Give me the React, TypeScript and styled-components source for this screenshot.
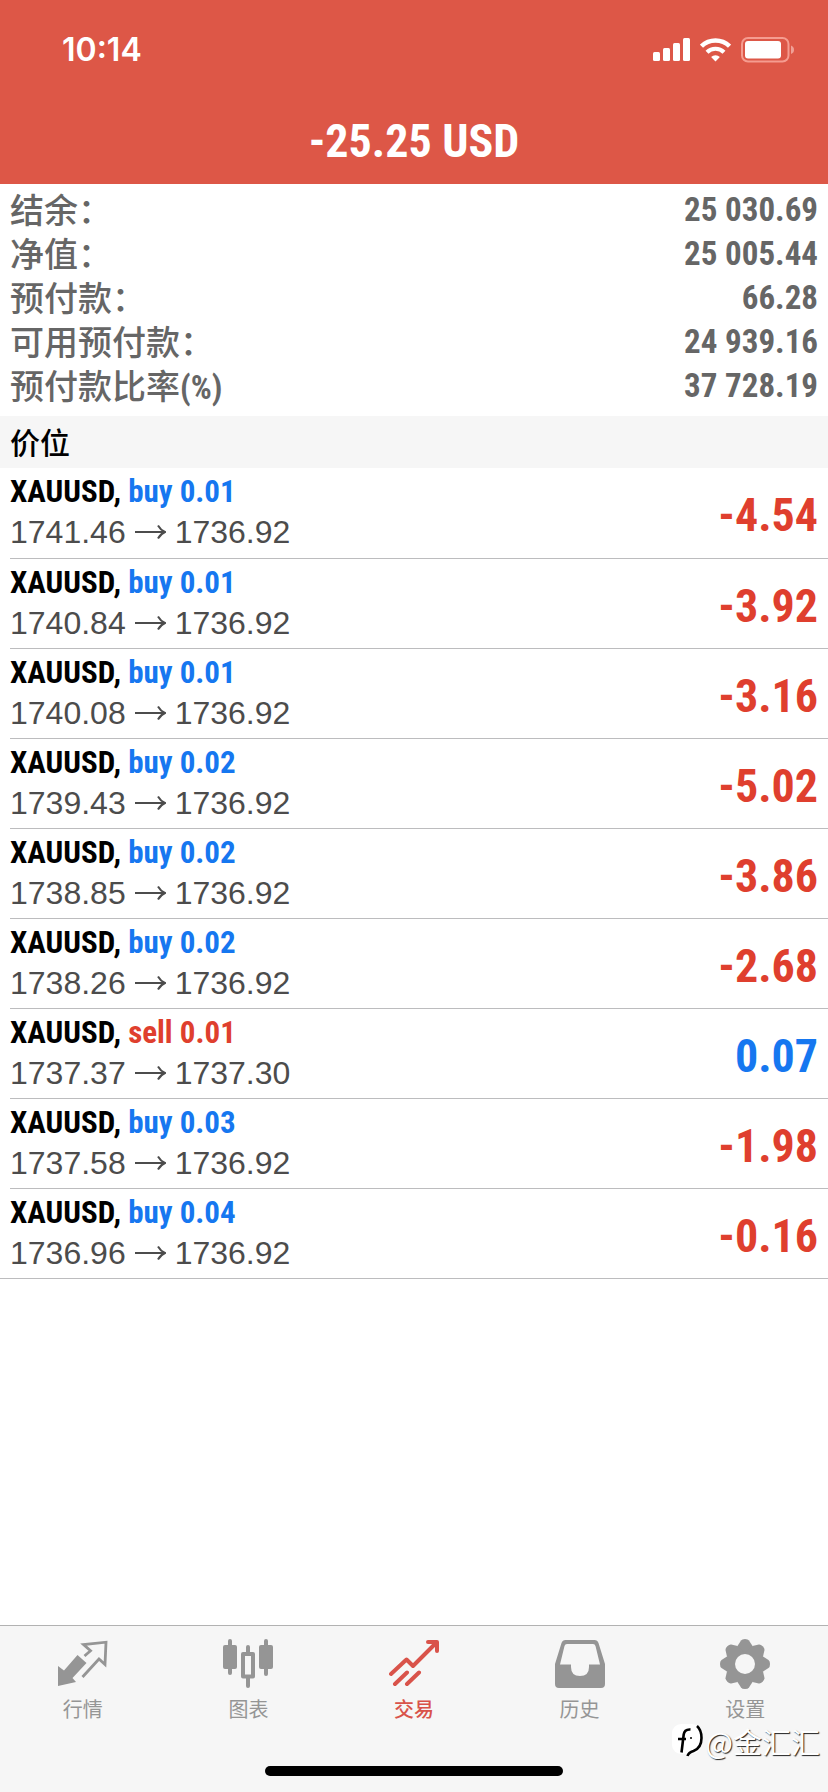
import React from "react";
import styled, { createGlobalStyle } from "styled-components";

const bold = `"Roboto Condensed", "Liberation Sans", Arial, "Noto Sans CJK SC", sans-serif`;
const regular = `"Liberation Sans", Arial, "Noto Sans CJK SC", sans-serif`;

const color = {
  header: "#dd5747",
  loss: "#df3f2e",
  profit: "#1677f0",
  muted: "#666666",
  price: "#4c4c4c",
  line: "#bcbcbe",
  bar: "#f6f6f6",
  tab: "#959595",
};

const GlobalStyle = createGlobalStyle`
  * { box-sizing: border-box; }
  body { margin: 0; background: #fff; font-family: ${regular}; }
`;

const Screen = styled.div`
  display: flex;
  flex-direction: column;
  min-height: 100vh;
`;

const Header = styled.header`
  background: ${color.header};
  color: #fff;
`;

const StatusBar = styled.div`
  display: flex;
  align-items: center;
  justify-content: space-between;
  height: 98px;
  padding: 2px 34px 0 62px;
`;

const Clock = styled.time`
  font: 600 32px/40px Inter, sans-serif;
`;

const StatusIcons = styled.div`
  display: flex;
  align-items: center;
  gap: 10px;
`;

const Total = styled.h1`
  margin: 0;
  text-align: center;
  font: 700 46px/86px ${bold};
`;

const Account = styled.dl`
  margin: 0;
  padding: 4px 10px 8px;
`;

const AccountRow = styled.div`
  display: flex;
  justify-content: space-between;
  color: ${color.muted};
`;

const Term = styled.dt`
  font: 500 34px/42px "Noto Sans CJK SC", sans-serif;
`;

const Suffix = styled.span`
  font: 700 33px/33px ${bold};
`;

const Amount = styled.dd`
  margin: 0;
  font: 700 33px/44px ${bold};
`;

const SectionTitle = styled.h2`
  margin: 0;
  padding: 0 10px 2px;
  background: ${color.bar};
  color: #000;
  font: 500 30px/50px "Noto Sans CJK SC", sans-serif;
`;

const Positions = styled.ul`
  margin: 0;
  padding: 0;
  list-style: none;
  border-bottom: 1px solid ${color.line};
`;

const Position = styled.li`
  display: flex;
  align-items: center;
  justify-content: space-between;
  height: 90px;
  margin-left: 10px;
  padding-right: 10px;

  & + & {
    border-top: 1px solid ${color.line};
  }
`;

const Order = styled.div`
  padding-bottom: 2px;
`;

const Deal = styled.div`
  font: 700 31px/40px ${bold};
  color: #000;
`;

const Side = styled.span<{ $sell: boolean }>`
  color: ${(p) => (p.$sell ? color.loss : color.profit)};
`;

const Prices = styled.div`
  display: flex;
  align-items: center;
  gap: 9px;
  font: 400 32px/40px ${regular};
  color: ${color.price};
`;

const Result = styled.div<{ $gain: boolean }>`
  padding-top: 4px;
  font: 700 46px/60px ${bold};
  color: ${(p) => (p.$gain ? color.profit : color.loss)};
`;

const Footer = styled.footer`
  position: sticky;
  bottom: 0;
  margin-top: auto;
  display: flex;
  flex-direction: column;
  align-items: center;
  justify-content: space-between;
  height: 167px;
  padding-bottom: 16px;
  border-top: 1px solid #b2b2b2;
  background: ${color.bar};
`;

const Tabs = styled.nav`
  display: flex;
  width: 100%;
`;

const Tab = styled.button<{ $active: boolean }>`
  flex: 1;
  display: flex;
  flex-direction: column;
  align-items: center;
  gap: 9px;
  padding: 13px 0 0;
  border: 0;
  background: none;
  color: ${(p) => (p.$active ? "#d9534a" : color.tab)};
  font: ${(p) => (p.$active ? 500 : 400)} 20px/24px ${regular};
`;

const HomeIndicator = styled.div`
  width: 36%;
  height: 10px;
  border-radius: 5px;
  background: #000;
`;

const Watermark = styled.div`
  position: absolute;
  right: 8px;
  bottom: 31px;
  display: flex;
  align-items: center;
  gap: 3px;
  color: #fff;
  font: 400 29px/40px "Noto Sans CJK SC", sans-serif;
  text-shadow: 1px 1px 1px #222;
`;

const SignalIcon = () => (
  <svg width="37" height="24" viewBox="0 0 37 24" fill="#fff" aria-hidden="true">
    <rect x="0" y="14" width="7" height="9" rx="1.5" />
    <rect x="10" y="10" width="7" height="13" rx="1.5" />
    <rect x="20" y="5" width="7" height="18" rx="1.5" />
    <rect x="30" y="0" width="7" height="23" rx="1.5" />
  </svg>
);

const WifiIcon = () => (
  <svg width="31" height="24" viewBox="0 0 31 24" fill="none" stroke="#fff" aria-hidden="true">
    <path d="M1.5 8.2a20 20 0 0 1 28 0" strokeWidth="4.4" />
    <path d="M7 14.2a12.2 12.2 0 0 1 17 0" strokeWidth="4.2" />
    <path d="M15.5 23.4l-4.4-4.5a6.4 6.4 0 0 1 8.8 0z" fill="#fff" stroke="none" />
  </svg>
);

const BatteryIcon = () => (
  <svg width="53" height="26" viewBox="0 0 53 26" aria-hidden="true">
    <rect x="1" y="1" width="46.5" height="23.5" rx="6" fill="none" stroke="#f59c90" strokeWidth="2" />
    <rect x="4" y="4" width="36" height="17.5" rx="3" fill="#fff" />
    <path d="M50 8.5q3 1.2 3 4.3t-3 4.3z" fill="#f0a096" />
  </svg>
);

const ArrowIcon = () => (
  <svg width="31" height="18" viewBox="0 0 31 18" fill="none" stroke="currentColor" strokeWidth="2" role="img" aria-label="to">
    <path d="M0 9h30M23 2.500q2.500 4.500 7 6.500q-4.500 2-7 6.500" />
  </svg>
);

const QuotesIcon = () => (
  <svg width="50" height="50" viewBox="0 0 50 50" aria-hidden="true">
    <path d="M19.5 16l9 8L14.500 39l3.500 4L0 47V27l6 4.500z" fill="currentColor" />
    <path d="M26.500 17l6-5.200-7-6.300 22.500-2.300-1 22.300-6-5.500L24.500 38" fill="none" stroke="currentColor" strokeWidth="2.800" />
  </svg>
);

const ChartIcon = () => (
  <svg width="50" height="50" viewBox="0 0 50 50" aria-hidden="true">
    <g fill="currentColor">
      <rect x="0" y="6" width="14" height="24" rx="2" />
      <rect x="5" y="0" width="4" height="36" rx="2" />
      <rect x="36" y="6" width="14" height="24" rx="2" />
      <rect x="41" y="0" width="4" height="37" rx="2" />
      <rect x="23" y="6" width="4" height="9" rx="2" />
      <rect x="23" y="37" width="4" height="12" rx="2" />
    </g>
    <rect x="20" y="15" width="10" height="22.500" fill="none" stroke="currentColor" strokeWidth="4" strokeLinejoin="round" />
  </svg>
);

const TradeIcon = () => (
  <svg width="50" height="50" viewBox="0 0 50 50" fill="none" stroke="currentColor" strokeWidth="4" strokeLinecap="round" strokeLinejoin="round" aria-hidden="true">
    <path d="M2 35l15.500-14.500L24 27 47 4M39 3h9v9M6 45l12-11.500M18 45l12-11.500" />
  </svg>
);

const HistoryIcon = () => (
  <svg width="50" height="50" viewBox="0 0 50 50" aria-hidden="true">
    <path
      fillRule="evenodd"
      fill="currentColor"
      d="M10.500 1h29q3 0 4 3L50 25v20q0 4-4 4H4q-4 0-4-4V25L6.500 4q1-3 4-3zM12 5q-2 0-2.500 2L5 25.500h11V28q0 9 9 9t9-9v-2.500h11L40.500 7Q40 5 38 5z"
    />
  </svg>
);

const SettingsIcon = () => (
  <svg width="50" height="50" viewBox="0 0 50 50" aria-hidden="true">
    <g fill="currentColor">
      {[0, 45, 90, 135].map((angle) => (
        <path key={angle} transform={`rotate(${angle} 25 25)`} d="M17.500 7L21 1.500Q22 0 25 0t4 1.500L32.500 7v36L29 48.500Q28 50 25 50t-4-1.500L17.500 43z" />
      ))}
    </g>
    <circle cx="25" cy="25" r="10" fill="#f6f6f6" />
  </svg>
);

const WatermarkLogo = () => (
  <svg width="31" height="34" viewBox="0 0 31 34" fill="none" aria-hidden="true">
    <rect x="0" y="0" width="29" height="30" rx="9" fill="#fff" />
    <path d="M18.500 5.500q-6-.5-6.800 5L9.500 28.500M6 15h8" stroke="#000" strokeWidth="2.600" />
    <path d="M25 2q4.500 4 4.500 12 0 10-8 13-5 1.500-6 5" stroke="#000" strokeWidth="2.600" />
    <circle cx="19" cy="14" r="1" fill="#000" />
  </svg>
);

const account = [
  { label: "结余：", value: "25 030.69" },
  { label: "净值：", value: "25 005.44" },
  { label: "预付款：", value: "66.28" },
  { label: "可用预付款：", value: "24 939.16" },
  { label: "预付款比率", suffix: "(%)", value: "37 728.19" },
];

const positions = [
  { side: "buy", volume: "0.01", open: "1741.46", current: "1736.92", result: "-4.54" },
  { side: "buy", volume: "0.01", open: "1740.84", current: "1736.92", result: "-3.92" },
  { side: "buy", volume: "0.01", open: "1740.08", current: "1736.92", result: "-3.16" },
  { side: "buy", volume: "0.02", open: "1739.43", current: "1736.92", result: "-5.02" },
  { side: "buy", volume: "0.02", open: "1738.85", current: "1736.92", result: "-3.86" },
  { side: "buy", volume: "0.02", open: "1738.26", current: "1736.92", result: "-2.68" },
  { side: "sell", volume: "0.01", open: "1737.37", current: "1737.30", result: "0.07" },
  { side: "buy", volume: "0.03", open: "1737.58", current: "1736.92", result: "-1.98" },
  { side: "buy", volume: "0.04", open: "1736.96", current: "1736.92", result: "-0.16" },
];

const tabs = [
  { label: "行情", Icon: QuotesIcon },
  { label: "图表", Icon: ChartIcon },
  { label: "交易", Icon: TradeIcon, active: true },
  { label: "历史", Icon: HistoryIcon },
  { label: "设置", Icon: SettingsIcon },
];

export default function App() {
  return (
    <Screen lang="zh-CN">
      <GlobalStyle />
      <Header>
        <StatusBar>
          <Clock>10:14</Clock>
          <StatusIcons>
            <SignalIcon />
            <WifiIcon />
            <BatteryIcon />
          </StatusIcons>
        </StatusBar>
        <Total>-25.25 USD</Total>
      </Header>
      <main>
        <Account>
          {account.map((row) => (
            <AccountRow key={row.label}>
              <Term>
                {row.label}
                {row.suffix && <Suffix>{row.suffix}</Suffix>}
              </Term>
              <Amount>{row.value}</Amount>
            </AccountRow>
          ))}
        </Account>
        <SectionTitle>价位</SectionTitle>
        <Positions>
          {positions.map((p) => (
            <Position key={p.open}>
              <Order>
                <Deal>
                  XAUUSD, <Side $sell={p.side === "sell"}>{p.side} {p.volume}</Side>
                </Deal>
                <Prices>
                  <span>{p.open}</span>
                  <ArrowIcon />
                  <span>{p.current}</span>
                </Prices>
              </Order>
              <Result $gain={!p.result.startsWith("-")}>{p.result}</Result>
            </Position>
          ))}
        </Positions>
      </main>
      <Footer>
        <Tabs>
          {tabs.map(({ label, Icon, active }) => (
            <Tab key={label} type="button" $active={!!active} aria-current={active ? "page" : undefined}>
              <Icon />
              {label}
            </Tab>
          ))}
        </Tabs>
        <HomeIndicator />
        <Watermark>
          <WatermarkLogo />
          @金汇汇
        </Watermark>
      </Footer>
    </Screen>
  );
}
